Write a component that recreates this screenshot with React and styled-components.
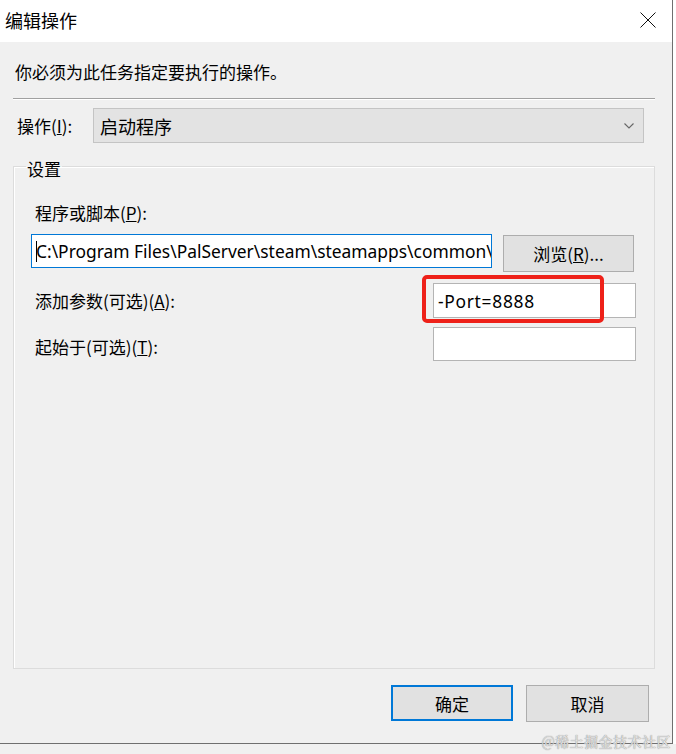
import React from "react";
import styled, { createGlobalStyle } from "styled-components";

const Global = createGlobalStyle`
  html, body { margin: 0; padding: 0; background: #f0f0f0; }
  body { font-family: "Noto Sans CJK SC", "Noto Sans", sans-serif; color: #000; }
  #root { width: 676px; height: 754px; background: #ffffff; position: relative; overflow: hidden; }
`;

const Window = styled.div`
  box-sizing: border-box;
  width: 673px;
  height: 744px;
  border-right: 1px solid #6f6f6f;
  border-bottom: 1px solid #6f6f6f;
  background: #f0f0f0;
  display: flex;
  flex-direction: column;
`;

const Below = styled.div`
  height: 10px;
  background: #f0f0f0;
`;

const TitleBar = styled.div`
  height: 42px;
  flex: none;
  background: #ffffff;
  display: flex;
  align-items: center;
  justify-content: space-between;
  padding: 0 16px 0 5px;
`;

const Title = styled.div`
  font-size: 18px;
  line-height: 24px;
  margin-top: -2px;
`;

const CloseIcon = styled.svg`
  display: block;
  width: 16px;
  height: 16px;
  margin-top: -2px;
`;

const Intro = styled.div`
  margin: 18px 0 0 15px;
  font-size: 17px;
  line-height: 24px;
`;

const Separator = styled.div`
  margin: 14px 17px 0 13px;
  height: 1px;
  background: #a0a0a0;
  border-bottom: 1px solid #ffffff;
`;

const ActionRow = styled.div`
  display: flex;
  align-items: center;
  margin: 8px 28px 0 17px;
`;

const Label = styled.span`
  font-size: 17px;
  line-height: 24px;
  white-space: nowrap;
  padding-left: ${(p) => p.$indent || 0}px;
  margin-top: ${(p) => p.$drop || 0}px;
`;

const ActionLabel = styled(Label)`
  width: 76px;
  flex: none;
`;

const Combo = styled.div`
  flex: 1;
  box-sizing: border-box;
  height: 35px;
  background: #e3e3e3;
  border: 1px solid #c4c4c4;
  display: flex;
  align-items: center;
  justify-content: space-between;
  padding: 0 9px 0 6px;
  font-size: 18px;
`;

const Chevron = styled.svg`
  display: block;
  width: 10px;
  height: 6px;
`;

const Group = styled.fieldset`
  flex: 1;
  margin: 8px 17px 16px 13px;
  padding: 20px 18px 0 17px;
  border: 1px solid #dcdcdc;
  box-shadow: inset 1px 1px 0 #ffffff;
  display: flex;
  flex-direction: column;
  min-width: 0;
`;

const Legend = styled.legend`
  margin-left: -5px;
  padding: 6px 1px 0 1px;
  font-size: 17px;
  line-height: 24px;
`;

const FieldRow = styled.div`
  display: flex;
  align-items: ${(p) => (p.$top ? "flex-start" : "center")};
  justify-content: space-between;
  gap: 11px;
  margin-top: ${(p) => p.$mt}px;
`;

const TextBox = styled.div`
  box-sizing: border-box;
  position: relative;
  width: ${(p) => p.$w}px;
  height: ${(p) => p.$h}px;
  flex: none;
  background: #ffffff;
  border: 1px solid ${(p) => (p.$focus ? "#0078d7" : "#b4b4b4")};
  display: flex;
  align-items: center;
  padding-left: 4px;
  font-family: "Noto Sans", "Noto Sans CJK SC", sans-serif;
  font-size: 17.4px;
  letter-spacing: ${(p) => p.$ls || 0}px;
  white-space: nowrap;
`;

const Clip = styled.span`
  overflow: hidden;
  flex: 1;
  min-width: 0;
  display: flex;
  align-items: center;
`;

const Caret = styled.span`
  flex: none;
  width: 1px;
  height: 21px;
  background: #000;
  margin-right: -1px;
`;

const Highlight = styled.div`
  position: absolute;
  left: -12px;
  top: -9px;
  width: 182px;
  height: 48px;
  box-sizing: border-box;
  border: 4px solid #ee2119;
  border-radius: 5px;
  pointer-events: none;
`;

const Button = styled.div`
  box-sizing: border-box;
  width: ${(p) => p.$w}px;
  height: ${(p) => p.$h}px;
  flex: none;
  background: #e1e1e1;
  border: ${(p) => (p.$default ? "2px solid #0078d7" : "1px solid #adadad")};
  display: flex;
  align-items: center;
  justify-content: center;
  font-size: 17px;
  margin-top: ${(p) => p.$mt || 0}px;
  margin-right: ${(p) => p.$mr || 0}px;
`;

const Footer = styled.div`
  display: flex;
  justify-content: flex-end;
  gap: 13px;
  padding: 0 23px 21px 0;
`;

const Watermark = styled.div`
  position: absolute;
  right: 5px;
  bottom: 4px;
  font-family: "Noto Serif CJK SC", "Noto Sans CJK SC", serif;
  font-size: 14px;
  line-height: 17px;
  color: #e6e6e6;
  text-shadow: 0 0 1px #8a8a8a, 0 0 1px #9a9a9a;
  letter-spacing: 0.5px;
`;

export default function App() {
  return (
    <>
      <Global />
      <Window>
        <TitleBar>
          <Title>编辑操作</Title>
          <CloseIcon viewBox="0 0 16 16">
            <path d="M0.5 0.5 L15.5 15.5 M15.5 0.5 L0.5 15.5" stroke="#111" strokeWidth="1" fill="none" />
          </CloseIcon>
        </TitleBar>
        <Intro>你必须为此任务指定要执行的操作。</Intro>
        <Separator />
        <ActionRow>
          <ActionLabel>
            操作(<u>I</u>):
          </ActionLabel>
          <Combo>
            <span>启动程序</span>
            <Chevron viewBox="0 0 10 6">
              <path d="M0.5 0.5 L5 5 L9.5 0.5" stroke="#666" strokeWidth="1.1" fill="none" />
            </Chevron>
          </Combo>
        </ActionRow>
        <Group>
          <Legend>设置</Legend>
          <Label $indent={4}>
            程序或脚本(<u>P</u>):
          </Label>
          <FieldRow $mt={9} $top>
            <TextBox $w={461} $h={34} $focus>
              <Caret />
              <Clip>C:\Program Files\PalServer\steam\steamapps\common\</Clip>
            </TextBox>
            <Button $w={131} $h={37} $mt={1} $mr={3}>
              浏览(<u>R</u>)...
            </Button>
          </FieldRow>
          <FieldRow $mt={11}>
            <Label $indent={4}>
              添加参数(可选)(<u>A</u>):
            </Label>
            <TextBox $w={203} $h={35} $ls={0.7}>
              <Clip>-Port=8888</Clip>
              <Highlight />
            </TextBox>
          </FieldRow>
          <FieldRow $mt={9}>
            <Label $indent={4} $drop={6}>
              起始于(可选)(<u>T</u>):
            </Label>
            <TextBox $w={203} $h={34} />
          </FieldRow>
        </Group>
        <Footer>
          <Button $w={122} $h={36} $default>
            确定
          </Button>
          <Button $w={123} $h={37}>
            取消
          </Button>
        </Footer>
      </Window>
      <Below />
      <Watermark>@稀土掘金技术社区</Watermark>
    </>
  );
}
